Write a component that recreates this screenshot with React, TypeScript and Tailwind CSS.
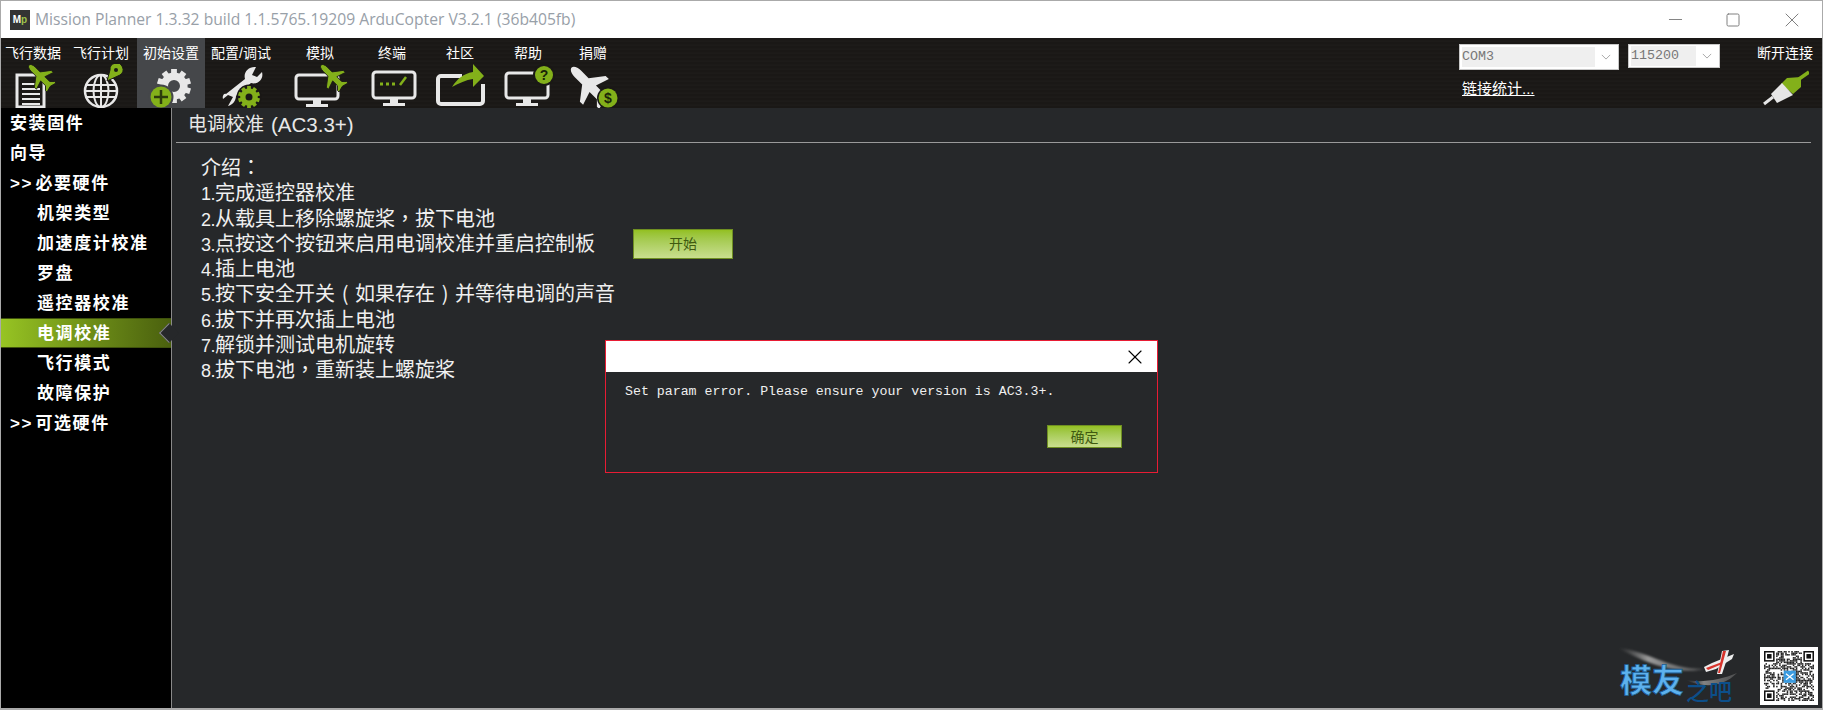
import { X, Minus, Square } from 'lucide-react'

const CJK = 'font-["Liberation_Sans","Noto_Sans_CJK_SC",sans-serif]'

const GREEN = '#83b01a'
const WHITE = '#e8e8e8'

const SIDE_ITEMS = [
  { label: '安装固件', indent: 'pl-[9px]' },
  { label: '向导', indent: 'pl-[9px]' },
  { label: '>> 必要硬件', indent: 'pl-[9px]' },
  { label: '机架类型', indent: 'pl-[36px]' },
  { label: '加速度计校准', indent: 'pl-[36px]' },
  { label: '罗盘', indent: 'pl-[36px]' },
  { label: '遥控器校准', indent: 'pl-[36px]' },
  { label: '电调校准', indent: 'pl-[36px]', active: true },
  { label: '飞行模式', indent: 'pl-[36px]' },
  { label: '故障保护', indent: 'pl-[36px]' },
  { label: '>> 可选硬件', indent: 'pl-[9px]' },
]

const STEPS = [
  '介绍：',
  '1.完成遥控器校准',
  '2.从载具上移除螺旋桨，拔下电池',
  '3.点按这个按钮来启用电调校准并重启控制板',
  '4.插上电池',
  '5.按下安全开关（如果存在）并等待电调的声音',
  '6.拔下并再次插上电池',
  '7.解锁并测试电机旋转',
  '8.拔下电池，重新装上螺旋桨',
]

const PLANE =
  'M0,-20 C2,-20 3.5,-17 3.5,-13 L3.5,-5 L14,3 L14,6.5 L3.5,3 L3.5,11 L7.5,15 L7.5,17.5 L0,15.5 L-7.5,17.5 L-7.5,15 L-3.5,11 L-3.5,3 L-14,6.5 L-14,3 L-3.5,-5 L-3.5,-13 C-3.5,-17 -2,-20 0,-20Z'

// the screenshot centres full width punctuation inside its cell, digits are smaller than the han text
function StepLine({ text }: { text: string }) {
  return (
    <div className="h-[25.3px] whitespace-nowrap">
      {text.split(/([，：（）]|^\d\.)/).map((part, i) => {
        if (/^\d\.$/.test(part)) {
          return (
            <span key={i} className="text-[18px] tracking-[-0.5px] leading-none">
              {part}
            </span>
          )
        }
        if (/[，：（）]/.test(part)) {
          return (
            <span key={i} className={`inline-block w-[20px] text-center leading-none font-["Noto_Sans_CJK_TC",sans-serif]`}>
              {part === '（' ? '(' : part === '）' ? ')' : part}
            </span>
          )
        }
        return <span key={i}>{part}</span>
      })}
    </div>
  )
}

function Monitor({ x, y, w, h }: { x: number; y: number; w: number; h: number }) {
  const cx = x + w / 2
  return (
    <g>
      <rect x={x} y={y} width={w} height={h} rx={3} fill="none" stroke={WHITE} strokeWidth={3} />
      <rect x={cx - 4} y={y + h} width={8} height={6} fill={WHITE} />
      <rect x={cx - 11} y={y + h + 5} width={22} height={3} fill={WHITE} />
    </g>
  )
}

function Gear({ cx, cy, r, color, hole }: { cx: number; cy: number; r: number; color: string; hole: number }) {
  const teeth = Array.from({ length: 10 }, (_, i) => i * 36)
  const outer = r * 0.8
  return (
    <g>
      {teeth.map((a) => (
        <rect
          key={a}
          x={cx - r * 0.17}
          y={cy - r}
          width={r * 0.34}
          height={r * 0.35}
          fill={color}
          transform={`rotate(${a} ${cx} ${cy})`}
        />
      ))}
      <circle cx={cx} cy={cy} r={(outer + hole) / 2} fill="none" stroke={color} strokeWidth={outer - hole} />
    </g>
  )
}

const NAV = [
  {
    label: '飞行数据',
    w: 'w-[68px]',
    labelClass: 'mr-[4px]',
    box: '1 64 68 44',
    icon: (
      <g>
        <path d="M17 75h20l7 7v25H17z" fill="none" stroke={WHITE} strokeWidth={3} />
        <path d="M22 84h14M22 89h18M22 94h18M22 99h18M22 104h18" stroke={WHITE} strokeWidth={2} />
        <path d={PLANE} fill={GREEN} stroke="#1a1816" strokeWidth={1} transform="translate(41 77) rotate(-45) scale(0.85)" />
      </g>
    ),
  },
  {
    label: '飞行计划',
    w: 'w-[68px]',
    labelClass: 'mr-[4px]',
    box: '69 64 68 44',
    icon: (
      <g stroke={WHITE} fill="none" strokeWidth={2}>
        <circle cx={101} cy={91} r={16} strokeWidth={2.5} />
        <ellipse cx={101} cy={91} rx={7.5} ry={16} />
        <path d="M101 75v32M86 85h30M86 91h30M86 97h30" />
        <path d="M107 81 L110 70 A6.5 6.5 0 1 1 120 75z" fill={GREEN} stroke="#1a1816" strokeWidth={1} />
        <circle cx={116} cy={70} r={2} fill="#1a1816" stroke="none" />
      </g>
    ),
  },
  {
    label: '初始设置',
    w: 'w-[68px]',
    labelClass: '',
    active: true,
    box: '137 64 68 44',
    icon: (
      <g>
        <Gear cx={174} cy={86} r={17} color={WHITE} hole={6} />
        <circle cx={161} cy={97} r={12.5} fill="#45474a" />
        <circle cx={161} cy={97} r={10.5} fill={GREEN} />
        <path d="M161 90v14M154 97h14" stroke="#2c3a0c" strokeWidth={2.5} />
      </g>
    ),
  },
  {
    label: '配置/调试',
    w: 'w-[72px]',
    labelClass: '',
    box: '205 64 72 44',
    icon: (
      <g>
        <path d="M256 67 C249 66 243 72 245 79 L226 94 C224 93 222 96 223 99 L228 95 L233 97 L228 106 C233 105 236 100 236 96 L251 83 C258 85 264 79 262 72 L257 77 L252 75z" fill={WHITE} />
        <circle cx={249} cy={97} r={12.5} fill="#1a1816" />
        <Gear cx={249} cy={97} r={11} color={GREEN} hole={3.5} />
      </g>
    ),
  },
  {
    label: '模拟',
    w: 'w-[86px]',
    labelClass: '',
    box: '277 64 86 44',
    icon: (
      <g>
        <Monitor x={296} y={75} w={42} h={24} />
        <path d={PLANE} fill={GREEN} stroke="#1a1816" strokeWidth={1} transform="translate(333 77) rotate(-45) scale(0.85)" />
      </g>
    ),
  },
  {
    label: '终端',
    w: 'w-[58px]',
    labelClass: '',
    box: '363 64 58 44',
    icon: (
      <g>
        <Monitor x={373} y={72} w={42} h={26} />
        <path d="M380 84h3M386 84h3M392 84h3" stroke={GREEN} strokeWidth={3} />
        <path d="M400 85 L406 77" stroke={GREEN} strokeWidth={2.5} />
      </g>
    ),
  },
  {
    label: '社区',
    w: 'w-[78px]',
    labelClass: '',
    box: '421 64 78 44',
    icon: (
      <g>
        <path d="M462 76H441a3 3 0 0 0-3 3v22a3 3 0 0 0 3 3h39a3 3 0 0 0 3-3V84" fill="none" stroke={WHITE} strokeWidth={4} />
        <path d="M452 87 C458 78 463 74 473 72 L473 64 L484 76 L473 87 L473 79 C466 80 459 83 452 87z" fill={GREEN} />
      </g>
    ),
  },
  {
    label: '帮助',
    w: 'w-[58px]',
    labelClass: '',
    box: '499 64 58 44',
    icon: (
      <g>
        <Monitor x={506} y={73} w={42} h={25} />
        <circle cx={544} cy={75} r={11} fill="#1a1816" />
        <circle cx={544} cy={75} r={9} fill={GREEN} />
        <text x={544} y={80} textAnchor="middle" fontSize={14} fontWeight={700} fontFamily="Liberation Sans" fill="#1a2408">?</text>
      </g>
    ),
  },
  {
    label: '捐赠',
    w: 'w-[72px]',
    labelClass: '',
    box: '557 64 72 44',
    icon: (
      <g>
        <path d={PLANE} fill={WHITE} transform="translate(590 86) rotate(-45) scale(1.3)" />
        <circle cx={608} cy={98} r={11} fill="#1a1816" />
        <circle cx={608} cy={98} r={9.5} fill={GREEN} />
        <text x={608} y={103} textAnchor="middle" fontSize={14} fontWeight={700} fontFamily="Liberation Sans" fill="#1a2408">$</text>
      </g>
    ),
  },
]

// qr code: finder squares plus pseudo random modules
function qrCells() {
  const size = 33
  const cells: [number, number][] = []
  const inFinder = (x: number, y: number) =>
    (x < 8 && y < 8) || (x >= size - 8 && y < 8) || (x < 8 && y >= size - 8)
  for (let y = 0; y < size; y++) {
    for (let x = 0; x < size; x++) {
      const n = Math.sin(x * 12.9898 + y * 78.233) * 43758.5453
      if (!inFinder(x, y) && n - Math.floor(n) > 0.5) cells.push([x, y])
    }
  }
  return cells
}

function QrCode() {
  const finders = [
    [0, 0],
    [26, 0],
    [0, 26],
  ]
  return (
    <div className="bg-white w-[58px] h-[58px] p-[4px] mb-[3px] shrink-0">
      <svg viewBox="0 0 33 33" className="block w-full h-full">
        {qrCells().map(([x, y]) => (
          <rect key={`${x}-${y}`} x={x} y={y} width={1} height={1} fill="#222" />
        ))}
        {finders.map(([x, y]) => (
          <g key={`${x}-${y}`}>
            <rect x={x + 0.5} y={y + 0.5} width={6} height={6} fill="#fff" stroke="#111" />
            <rect x={x + 2} y={y + 2} width={3} height={3} fill="#111" />
          </g>
        ))}
        <rect x={13} y={13} width={8} height={8} fill="#3a9be0" />
        <path d="M14.5 15l5 4M19.5 15l-5 4" stroke="#fff" strokeWidth={0.8} />
      </svg>
    </div>
  )
}

function Logo() {
  return (
    <svg viewBox="0 0 122 61" className="block w-[122px] h-[61px] shrink-0">
      <defs>
        <linearGradient id="swoosh" x1="0" x2="1" y1="0" y2="0">
          <stop offset="0" stopColor="#6a6a6a" stopOpacity={0} />
          <stop offset="0.35" stopColor="#9a9a9a" />
          <stop offset="1" stopColor="#777" stopOpacity={0.6} />
        </linearGradient>
        <filter id="soft">
          <feGaussianBlur stdDeviation="1" />
        </filter>
      </defs>
      <path d="M2 1 C30 3 50 22 88 22 C70 27 40 22 2 1z" fill="url(#swoosh)" filter="url(#soft)" />
      <path d="M70 33 C85 36 105 33 121 26 C105 42 85 40 70 33z" fill="url(#swoosh)" opacity={0.8} />
      <path d="M106 4 L113 3 L110 15 L106 27 L101 27 L104 14z" fill="#eee" />
      <path d="M88 20 L96 16 L118 7 L116 12 L100 22 L90 25z" fill="#eee" />
      <path d="M107 4 L110 4 L104 26 L102 26z" fill="#d8342c" />
      <path d="M90 21 L106 15 L106 17 L92 23z" fill="#d8342c" />
      <text x={4} y={45} fontSize={32} fontWeight={700} fontFamily="Noto Sans CJK SC" fill="#5db1ee" stroke="#1b5d94" strokeWidth={0.8}>模友</text>
      <text x={70} y={53} fontSize={23} fontWeight={500} fontFamily="Noto Sans CJK SC" fill="#0c4f8a">之吧</text>
    </svg>
  )
}

function Select({ value, outer, inner, height }: { value: string; outer: string; inner: string; height: string }) {
  return (
    <div className={`${outer} ${height} bg-white border-[1px] border-[#c8c8c8] flex items-center pl-[2px] shrink-0`}>
      <div className={`${inner} h-[20px] bg-[#efefef] flex items-center font-["Liberation_Mono",monospace] text-[13.33px] text-[#777]`}>
        {value}
      </div>
      <svg viewBox="0 0 12 7" className="w-[10px] h-[6px] ml-auto mr-[7px]">
        <path d="M1 1l5 5 5-5" fill="none" stroke="#999" strokeWidth={1} />
      </svg>
    </div>
  )
}

export default function App() {
  return (
    <div className={`relative w-[1823px] h-[710px] flex flex-col overflow-hidden bg-[#26282a] ${CJK} border-t-[1px] border-l-[1px] border-r-[1px] border-b-[2px] border-[#aaaaaa]`}>
      {/* Title bar */}
      <div className="h-[37px] bg-white flex items-center shrink-0 pl-[9px]">
        <div className="w-[20px] h-[20px] bg-[#333] flex items-center justify-center text-[10px] font-bold text-white leading-none">
          M<span className="text-[#9cc24a]">p</span>
        </div>
        <span className="ml-[5px] font-['Open_Sans',sans-serif] text-[15.67px] text-[#98a0a8] whitespace-nowrap">
          Mission Planner 1.3.32 build 1.1.5765.19209 ArduCopter V3.2.1 (36b405fb)
        </span>
        <div className="ml-auto flex items-center gap-[39px] pr-[18px] text-[#808080]">
          <Minus size={21} strokeWidth={1.1} />
          <Square size={16} strokeWidth={1.5} />
          <X size={24} strokeWidth={1} />
        </div>
      </div>

      {/* Top menu */}
      <div className="h-[70px] shrink-0 flex bg-[#1a1816] bg-[repeating-linear-gradient(0deg,#1a1816_0px,#1a1816_2px,#201e1c_3px,#181614_4px)]">
        {NAV.map((n) => (
          <div key={n.label} className={`${n.w} flex flex-col items-center shrink-0 ${n.active ? 'bg-[#45474a]' : ''}`}>
            <div className={`${n.labelClass} h-[26px] pt-[4px] text-[14px] leading-[22px] text-white whitespace-nowrap`}>{n.label}</div>
            <svg viewBox={n.box} className="block w-full h-[44px]">
              {n.icon}
            </svg>
          </div>
        ))}

        <div className="ml-[830px] flex flex-col pt-[6px] w-[262px] shrink-0">
          <div className="flex gap-[9px]">
            <Select value="COM3" outer="w-[160px]" inner="w-[133px]" height="h-[26px]" />
            <Select value="115200" outer="w-[92px]" inner="w-[65px]" height="h-[24px]" />
          </div>
          <a className="ml-[3px] mt-[9px] text-[15px] leading-[20px] text-white underline whitespace-nowrap">链接统计...</a>
        </div>
        <div className="ml-[36px] flex flex-col items-start pt-[4px] shrink-0">
          <div className="text-[14px] leading-[22px] text-white whitespace-nowrap">断开连接</div>
          <svg viewBox="0 0 46 36" className="block w-[46px] h-[36px] ml-[6px] mt-[6px]">
            <path d="M46 2 L36 9" stroke={GREEN} strokeWidth={3.5} />
            <path d="M38 7 L24 8 L18 14 L30 24 L38 17z" fill={GREEN} />
            <path d="M19 13 L8 24 L14 33 L30 25z" fill="#e6e6e6" />
            <path d="M10 27 L1 34" stroke="#e6e6e6" strokeWidth={3} />
          </svg>
        </div>
      </div>

      <div className="flex-1 flex min-h-0">
        {/* Sidebar */}
        <div className="w-[171px] shrink-0 bg-black border-r-[1px] border-[#8a8a8a]">
          {SIDE_ITEMS.map((item) => (
            <div
              key={item.label}
              className={`relative h-[30px] flex items-center ${item.indent} pt-[2px] text-[17px] font-bold tracking-[1.6px] [word-spacing:-4px] text-white whitespace-pre ${
                item.active
                  ? 'bg-gradient-to-r from-[#97c423] to-[#4a600e] border-y-[1px] border-[#3f520c]'
                  : ''
              }`}
            >
              {item.label}
              {item.active && (
                <div className="absolute right-[-5px] top-[7px] w-[14px] h-[14px] rotate-45 bg-[#26282a] border-l-[1px] border-b-[1px] border-[#8a8a8a]" />
              )}
            </div>
          ))}
        </div>

        {/* Content */}
        <div className="relative flex-1 min-w-0 flex flex-col">
          <div className="ml-[4px] mr-[11px] h-[35px] flex items-center pl-[12px] border-b-[1px] border-[#9a9a9a] text-[19px] text-[#e8e8e8]">
            电调校准 <span className="ml-[7px] text-[20.5px]">(AC3.3+)</span>
          </div>

          <div className="flex pl-[29px] pt-[13px]">
            <div className="w-[432px] shrink-0 text-[20px] leading-[25.3px] text-[#f0f0f0]">
              {STEPS.map((s) => (
                <StepLine key={s} text={s} />
              ))}
            </div>
            <button className="mt-[73px] w-[100px] h-[30px] border-[1px] border-[#6f8f22] bg-gradient-to-b from-[#93c020] to-[#c9de8e] text-[14px] text-[#3f5a10]">
              开始
            </button>
          </div>

          <div className="mt-auto flex justify-end items-end gap-[22px] pr-[4px]">
            <Logo />
            <QrCode />
          </div>
        </div>
      </div>

      {/* Error dialog */}
      <div className="absolute left-[604px] top-[339px] w-[553px] h-[133px] bg-[#26282a] border-[1px] border-[#e81c34] flex flex-col">
        <div className="h-[31px] bg-white flex items-center justify-end pr-[10px] shrink-0">
          <X size={24} strokeWidth={1.1} className="text-black" />
        </div>
        <div className="pl-[19px] pt-[10px] font-['Liberation_Mono',monospace] text-[13.25px] leading-[20px] text-[#f0f0f0] whitespace-nowrap">
          Set param error. Please ensure your version is AC3.3+.
        </div>
        <button className="absolute left-[441px] top-[84px] w-[75px] h-[23px] border-[1px] border-[#6f8f22] bg-gradient-to-b from-[#93c020] to-[#c9de8e] text-[14px] leading-none text-[#3f5a10]">
          确定
        </button>
      </div>
    </div>
  )
}
